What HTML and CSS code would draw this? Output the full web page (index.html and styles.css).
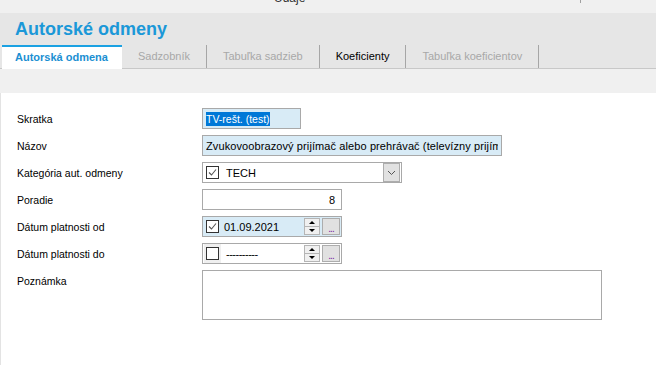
FILE: index.html
```html
<!DOCTYPE html>
<html lang="sk">
<head>
  <meta charset="UTF-8">
  <title>Autorské odmeny</title>
  <link rel="stylesheet" href="styles.css">
</head>
<body>
  <div class="topbar">
    <span></span>
    <span class="topbar-title">Údaje</span>
    <span class="topbar-sep"></span>
  </div>

  <div class="header">
    <h1>Autorské odmeny</h1>
    <div class="tabs">
      <div class="tab active">Autorská odmena</div>
      <div class="tab">Sadzobník</div>
      <div class="tab">Tabuľka sadzieb</div>
      <div class="tab dark">Koeficienty</div>
      <div class="tab">Tabuľka koeficientov</div>
    </div>
  </div>

  <div class="strip"></div>

  <div class="panel">
    <div class="form">
      <label>Skratka</label>
      <div class="field filled w-skratka"><span class="selected-text">TV-rešt. (test)</span></div>

      <label>Názov</label>
      <div class="field filled w-nazov"><span class="clip">Zvukovoobrazový prijímač alebo prehrávač (televízny prijímač</span></div>

      <label>Kategória aut. odmeny</label>
      <div class="field w-kategoria">
        <span class="check checked"><svg width="11" height="11" viewBox="0 0 11 11"><polyline points="2,5.5 4.5,8 9,2.5" fill="none" stroke="#555" stroke-width="1.1"/></svg></span>
        <span class="combo-text">TECH</span>
        <span class="drop-btn"><svg width="9" height="6" viewBox="0 0 9 6"><polyline points="1,1 4.5,4.5 8,1" fill="none" stroke="#555" stroke-width="1"/></svg></span>
      </div>

      <label>Poradie</label>
      <div class="field w-short num">8</div>

      <label>Dátum platnosti od</label>
      <div class="field filled w-short date">
        <span class="check checked"><svg width="11" height="11" viewBox="0 0 11 11"><polyline points="2,5.5 4.5,8 9,2.5" fill="none" stroke="#555" stroke-width="1.1"/></svg></span>
        <span class="date-text">01.09.2021</span>
        <span class="spin"><span class="spin-up"></span><span class="spin-down"></span></span>
        <span class="dots-btn">...</span>
      </div>

      <label>Dátum platnosti do</label>
      <div class="field w-short date">
        <span class="check-wrap"><span class="check"></span></span>
        <span class="date-text dashes">----------</span>
        <span class="spin"><span class="spin-up"></span><span class="spin-down"></span></span>
        <span class="dots-btn">...</span>
      </div>

      <label class="top">Poznámka</label>
      <div class="memo"></div>
    </div>
  </div>
</body>
</html>
```

FILE: styles.css
```css
* {
  margin: 0;
  padding: 0;
  box-sizing: border-box;
}

body {
  font-family: 'Liberation Sans', Arial, sans-serif;
  background-color: #f0f0f0;
  color: #000;
  width: 656px;
  height: 365px;
  overflow: hidden;
}

/* Top bar (cut off) */
.topbar {
  display: grid;
  grid-template-columns: 274px 306px 1px;
  height: 13px;
  overflow: hidden;
  background: #f0f0f0;
}

.topbar-title {
  font-size: 12px;
  line-height: 14px;
  margin-top: -9px;
  color: #333;
}

.topbar-sep {
  height: 3px;
  background: #a0a0a0;
}

/* Header with title and tabs */
.header {
  background: #e6e6e6;
  border-bottom: 1px solid #c8c8c8;
}

h1 {
  font-size: 18px;
  line-height: 20px;
  font-weight: bold;
  color: #1b98d8;
  padding: 6px 0 0 15px;
}

.tabs {
  display: flex;
  height: 23px;
  margin: 6px 0 0 2px;
}

.tab {
  font-size: 11px;
  line-height: 22px;
  padding: 0 16px 0 16px;
  color: #a8a8a8;
  border-right: 1px solid #a6a6a6;
  white-space: nowrap;
}

.tab.active {
  width: 120px;
  padding: 0 13px;
  height: 24px;
  margin-bottom: -1px;
  background: #fff;
  border-top: 2px solid #1ba1e2;
  border-right: none;
  color: #1b8fd2;
  font-weight: bold;
  line-height: 21px;
}

.tab.dark {
  color: #000;
}

.strip {
  height: 24px;
  background: #f0f0f0;
}

/* Form panel */
.panel {
  background: #fff;
  border-left: 1px solid #e3e3e3;
  height: 272px;
}

.form {
  display: grid;
  grid-template-columns: 185px auto;
  row-gap: 6px;
  align-items: center;
  justify-items: start;
  padding: 15px 0 0 16px;
}

.form label {
  font-size: 10.5px;
  color: #000;
}

.form label.top {
  align-self: start;
  margin-top: 5px;
}

.field {
  height: 21px;
  border: 1px solid #a9a9a9;
  background: #fff;
  display: flex;
  align-items: center;
  padding: 0 3px;
  font-size: 11px;
  overflow: hidden;
  white-space: nowrap;
}

.field.filled {
  background: #d8ebf6;
}

.w-skratka { width: 99px; }
.w-nazov { width: 300px; }
.w-kategoria { width: 200px; padding-right: 1px; }
.w-short { width: 140px; }

.selected-text {
  background: #0078d7;
  color: #fff;
  line-height: 14px;
  font-size: 10.5px;
}

.clip {
  overflow: hidden;
  letter-spacing: 0.1px;
}

.num {
  justify-content: flex-end;
  padding-right: 6px;
}

/* Checkboxes */
.check {
  width: 13px;
  height: 13px;
  border: 1px solid #333;
  background: #fff;
  display: flex;
  align-items: center;
  justify-content: center;
  flex-shrink: 0;
}

.check-wrap {
  background: #efefef;
  padding: 3px 2px;
  margin-left: -2px;
  display: flex;
}

.combo-text {
  margin-left: 7px;
  font-size: 11px;
}

.drop-btn {
  margin-left: auto;
  width: 17px;
  height: 19px;
  border: 1px solid #adadad;
  background: #e1e1e1;
  display: flex;
  align-items: center;
  justify-content: center;
}

/* Date pickers */
.date {
  padding-right: 1px;
}

.date-text {
  margin-left: 5px;
  font-size: 11px;
}

.dashes {
  letter-spacing: -0.5px;
}

.spin {
  margin-left: auto;
  width: 16px;
  height: 17px;
  display: flex;
  flex-direction: column;
  border: 1px solid #b5b5b5;
  background: #f0f0f0;
}

.spin-up,
.spin-down {
  flex: 1;
  position: relative;
}

.spin-up {
  border-bottom: 1px solid #b5b5b5;
}

.spin-up::after,
.spin-down::after {
  content: '';
  position: absolute;
  left: 4px;
  top: 2px;
  border-left: 3px solid transparent;
  border-right: 3px solid transparent;
}

.spin-up::after {
  border-bottom: 3px solid #000;
}

.spin-down::after {
  border-top: 3px solid #000;
}

.dots-btn {
  margin-left: 2px;
  width: 18px;
  height: 17px;
  border: 1px solid #adadad;
  background: #e1e1e1;
  color: #7a1fa2;
  font-size: 10px;
  line-height: 19px;
  text-align: center;
  letter-spacing: -1px;
}

.memo {
  width: 400px;
  height: 50px;
  border: 1px solid #a9a9a9;
  background: #fff;
}
```
